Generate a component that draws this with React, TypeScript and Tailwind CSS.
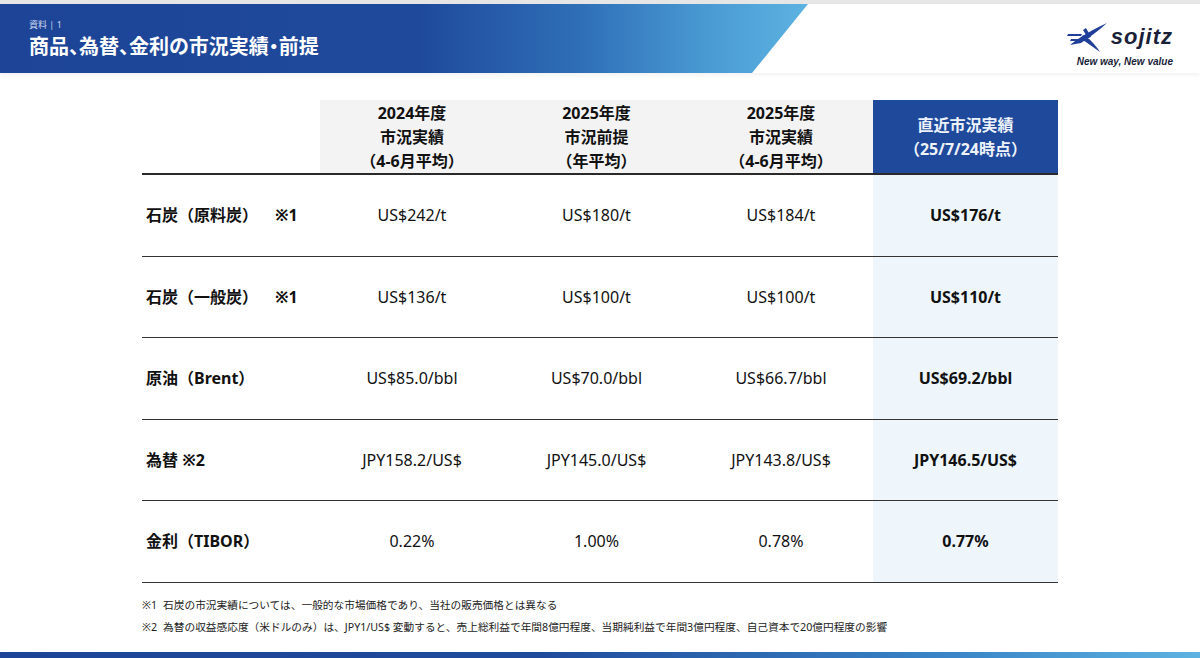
import React from "react"

const rows = [
  { label: "石炭（原料炭）", note: "※1", v: ["US$242/t", "US$180/t", "US$184/t", "US$176/t"] },
  { label: "石炭（一般炭）", note: "※1", v: ["US$136/t", "US$100/t", "US$100/t", "US$110/t"] },
  { label: "原油（Brent）", note: "", v: ["US$85.0/bbl", "US$70.0/bbl", "US$66.7/bbl", "US$69.2/bbl"] },
  { label: "為替 ※2", note: "", v: ["JPY158.2/US$", "JPY145.0/US$", "JPY143.8/US$", "JPY146.5/US$"] },
  { label: "金利（TIBOR）", note: "", v: ["0.22%", "1.00%", "0.78%", "0.77%"] },
]

const heads = [
  ["2024年度", "市況実績", "（4-6月平均）"],
  ["2025年度", "市況前提", "（年平均）"],
  ["2025年度", "市況実績", "（4-6月平均）"],
]

const font = { fontFamily: '"Noto Sans", "Noto Sans CJK JP", sans-serif' }

const Logo = () => (
  <div className="flex flex-col items-end pr-[27px] pt-[18px]">
    <div className="flex items-center gap-[4px]">
      <svg width="40" height="30" viewBox="0 0 40 30">
        <path d="M3 23 C12 16 24 8 40 1 C31 9 23 15 14 21 Z" fill="#1f3f9a" />
        <path d="M16 13 C22 16 28 22 33 30 C26 25 21 21 14 17 Z" fill="#1f3f9a" />
        <path d="M19 6 L24 15 L21 16 L16 8 Z" fill="#1f3f9a" />
        <path d="M1 12 L15 12 L14 14 L0 14 Z" fill="#1f3f9a" />
        <path d="M4 17 L12 17 L11 19 L3 19 Z" fill="#1f3f9a" />
      </svg>
      <span
        className="text-[22px] font-bold italic leading-none tracking-[1px] text-[#1b1f3a]"
        style={{ fontFamily: '"Liberation Sans", sans-serif' }}
      >
        sojitz
      </span>
    </div>
    <span
      className="mt-[5px] text-[10px] font-bold italic leading-none text-[#1b1f3a]"
      style={{ fontFamily: '"Liberation Sans", sans-serif' }}
    >
      New way, New value
    </span>
  </div>
)

export default function App() {
  return (
    <div className="flex h-[658px] w-[1200px] flex-col bg-white text-[#111]" style={font}>
      <div className="h-[4px] bg-[#e6e6e6]" />
      <div className="flex h-[69px] items-start justify-between shadow-[0_2px_4px_rgba(0,0,0,0.06)]">
        <div className="flex h-full w-[808px] flex-col justify-center bg-[linear-gradient(90deg,#1d4496_0%,#1f4a9c_52%,#2f6fb8_72%,#4a9bd4_88%,#5cb3e1_100%)] pl-[29px] [clip-path:polygon(0_0,808px_0,752px_100%,0_100%)]">
          <div className="text-[9px] leading-none text-[#c9d6ef]">資料 | 1</div>
          <div className="mt-[8px] text-[20px] font-bold leading-none text-white [font-feature-settings:'palt']">
            商品、為替、金利の市況実績・前提
          </div>
        </div>
        <Logo />
      </div>

      <div className="ml-[142px] mt-[27px] grid w-[916px] grid-cols-[178px_184px_185px_184px_185px]">
        <div className="h-[75px] border-b-2 border-[#2a2a2a]" />
        {heads.map((h, i) => (
          <div
            key={i}
            className="flex h-[75px] flex-col items-center justify-center border-b-2 border-[#2a2a2a] bg-[#f3f3f3] text-[16px] font-bold leading-[24px]"
          >
            {h.map((t) => (
              <span key={t}>{t}</span>
            ))}
          </div>
        ))}
        <div className="flex h-[75px] flex-col items-center justify-center border-b-2 border-[#2a2a2a] bg-[#1f4a9c] text-[16px] font-bold leading-[24px] text-[#eef3fb]">
          <span>直近市況実績</span>
          <span>（25/7/24時点）</span>
        </div>

        {rows.map((r) => (
          <React.Fragment key={r.label}>
            <div className="flex h-[81.5px] items-center border-b-[1.5px] border-[#333] pl-[4px] text-[16px] font-bold">
              <span>{r.label}</span>
              {r.note && <span className="ml-[17px]">{r.note}</span>}
            </div>
            {r.v.slice(0, 3).map((v, i) => (
              <div
                key={i}
                className="flex h-[81.5px] items-center justify-center border-b-[1.5px] border-[#333] text-[16px]"
              >
                {v}
              </div>
            ))}
            <div className="flex h-[81.5px] items-center justify-center border-b-[1.5px] border-[#333] bg-[#eef6fc] text-[16px] font-bold">
              {r.v[3]}
            </div>
          </React.Fragment>
        ))}
      </div>

      <div className="ml-[142px] mt-[15px] flex flex-col gap-[8px] text-[10.7px] leading-[14px] text-[#222]">
        <div className="flex gap-[6px]">
          <span>※1</span>
          <span>石炭の市況実績については、一般的な市場価格であり、当社の販売価格とは異なる</span>
        </div>
        <div className="flex gap-[6px]">
          <span>※2</span>
          <span>
            為替の収益感応度（米ドルのみ）は、JPY1/US$ 変動すると、売上総利益で年間8億円程度、当期純利益で年間3億円程度、自己資本で20億円程度の影響
          </span>
        </div>
      </div>

      <div className="mt-auto h-[6px] bg-[linear-gradient(90deg,#1d4496_0%,#1f4a9c_45%,#3a86c8_80%,#5cb3e1_100%)]" />
    </div>
  )
}
